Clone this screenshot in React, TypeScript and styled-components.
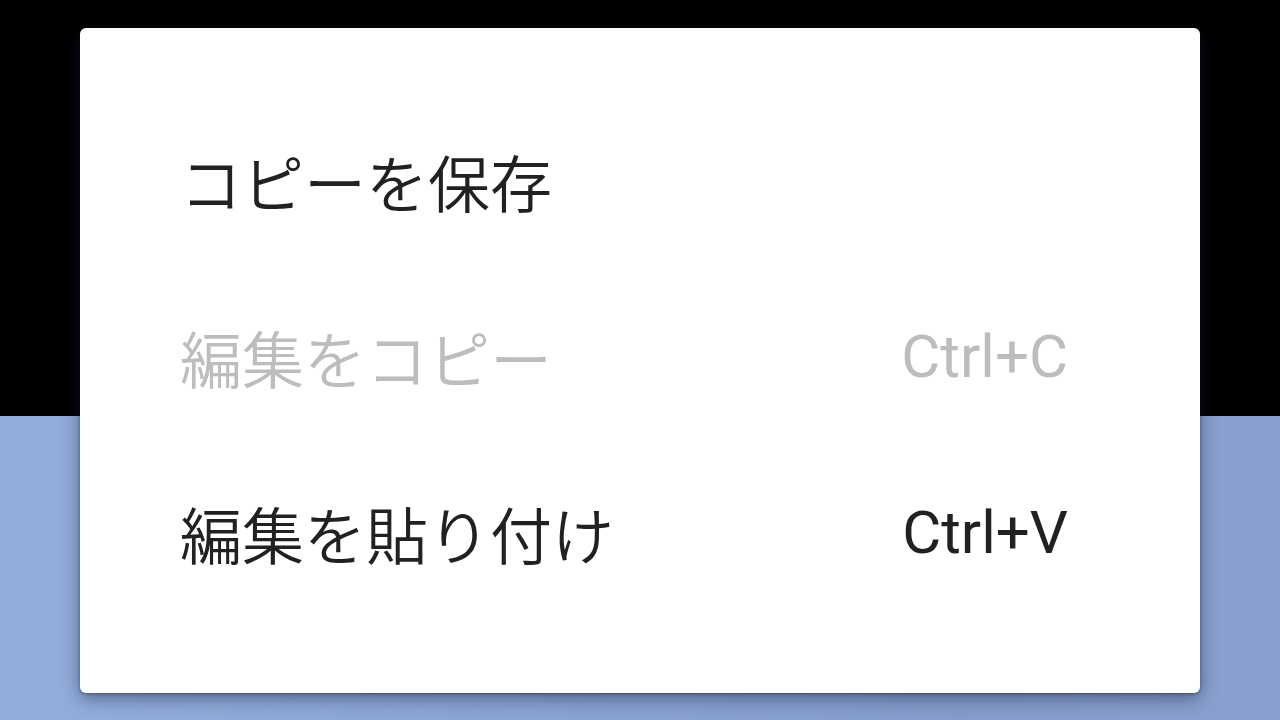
import React from 'react';
import styled, { createGlobalStyle } from 'styled-components';

const GlobalStyle = createGlobalStyle`
    html, body {
        margin: 0;
        padding: 0;
        width: 1280px;
        height: 720px;
        overflow: hidden;
    }
    body {
        font-family: Roboto, 'Noto Sans CJK JP', sans-serif;
    }
`;

type MenuItem = {
    label: string;
    shortcut?: string;
    disabled?: boolean;
};

const items: MenuItem[] = [
    { label: 'コピーを保存' },
    { label: '編集をコピー', shortcut: 'Ctrl+C', disabled: true },
    { label: '編集を貼り付け', shortcut: 'Ctrl+V' },
];

export default function App() {
    return (
        <>
            <GlobalStyle />
            <Screen>
                <TopArea />
                <BottomArea />
                <Dialog>
                    {items.map((item) => (
                        <Row key={item.label} $disabled={item.disabled}>
                            <Label>{item.label}</Label>
                            {item.shortcut && <Shortcut>{item.shortcut}</Shortcut>}
                        </Row>
                    ))}
                </Dialog>
            </Screen>
        </>
    );
}

const Screen = styled.div`
    position: relative;
    display: flex;
    flex-direction: column;
    width: 1280px;
    height: 720px;
    overflow: hidden;
`;

const TopArea = styled.div`
    height: 416px;
    background: #000;
`;

const BottomArea = styled.div`
    flex: 1;
    background: linear-gradient(90deg, #94aedc 0%, #8ba4d3 40%, #859dcb 75%, #8aa1cf 100%);
`;

const Dialog = styled.div`
    position: absolute;
    top: 28px;
    left: 80px;
    width: 1120px;
    height: 665px;
    box-sizing: border-box;
    padding: 65px 132px 72px 100px;
    display: flex;
    flex-direction: column;
    background: #fff;
    border-radius: 6px;
    box-shadow: 0 5px 18px rgba(20, 30, 60, 0.5), 0 1px 3px rgba(0, 0, 0, 0.35);
`;

const Row = styled.div<{ $disabled?: boolean }>`
    height: 176px;
    display: flex;
    align-items: center;
    justify-content: space-between;
    font-size: 62px;
    line-height: 1;
    color: ${(p) => (p.$disabled ? '#bdbdbd' : '#212121')};
`;

const Label = styled.span`
    font-family: 'Noto Sans CJK JP', Roboto, sans-serif;
    font-weight: 350;
`;

const Shortcut = styled.span`
    font-family: Roboto, sans-serif;
    font-size: 60px;
`;
